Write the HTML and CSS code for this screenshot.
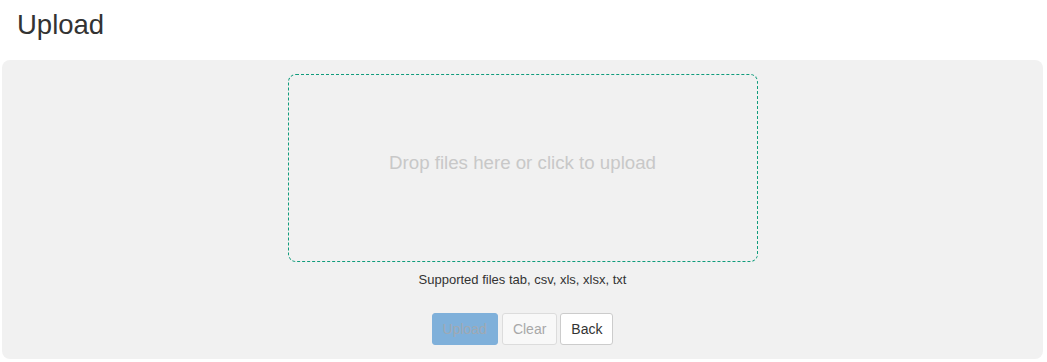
FILE: index.html
```html
<!DOCTYPE html>
<html lang="en">
<head>
    <meta charset="UTF-8">
    <meta name="viewport" content="width=device-width, initial-scale=1.0">
    <title>Upload</title>
    <link rel="stylesheet" href="styles.css">
</head>
<body>
    <div class="page">
        <h1 class="page-title">Upload</h1>

        <!-- Upload Panel -->
        <div class="upload-panel">
            <div class="dropzone">
                <span class="dropzone-text">Drop files here or click to upload</span>
            </div>

            <p class="supported">Supported files tab, csv, xls, xlsx, txt</p>

            <div class="actions">
                <button class="btn btn-primary" disabled>Upload</button>
                <button class="btn btn-light" disabled>Clear</button>
                <button class="btn btn-default">Back</button>
            </div>
        </div>
    </div>
</body>
</html>
```

FILE: styles.css
```css
/* General Styling */
body {
    font-family: "Liberation Sans", Arial, sans-serif;
    margin: 0;
    padding: 0;
    background-color: #ffffff;
    color: #333;
}

.page {
    padding: 0 4px 4px 2px;
}

/* Title */
.page-title {
    margin: 9px 0 0 15px;
    font-size: 27.5px;
    font-weight: normal;
    line-height: 31px;
    color: #333;
}

/* Panel */
.upload-panel {
    margin-top: 20px;
    padding: 14px 0 14px;
    background-color: #f1f1f1;
    border-radius: 8px;
    display: flex;
    flex-direction: column;
    align-items: center;
}

/* Dropzone */
.dropzone {
    width: 470px;
    height: 188px;
    box-sizing: border-box;
    padding-bottom: 10px;
    border: 1px dashed #109c7c;
    border-radius: 8px;
    display: flex;
    justify-content: center;
    align-items: center;
    cursor: pointer;
}

.dropzone-text {
    font-size: 18.7px;
    color: #c8c8c8;
}

.supported {
    margin: 9px 0 0;
    font-size: 13px;
    line-height: 18px;
    color: #333;
}

/* Buttons */
.actions {
    margin-top: 24px;
    display: flex;
    gap: 4px;
}

.btn {
    height: 32px;
    padding: 0 10px;
    font-family: inherit;
    font-size: 14px;
    border: 1px solid #ccc;
    border-radius: 3px;
    background-color: #fff;
    color: #333;
    cursor: pointer;
}

.btn-primary {
    background-color: #7fb0da;
    border-color: #7fb0da;
    color: #9fa9b3;
    cursor: default;
}

.btn-light {
    background-color: #f8f8f8;
    border-color: #dcdcdc;
    color: #a8a8a8;
    cursor: default;
}

.btn-default {
    margin-left: -1px;
}
```
